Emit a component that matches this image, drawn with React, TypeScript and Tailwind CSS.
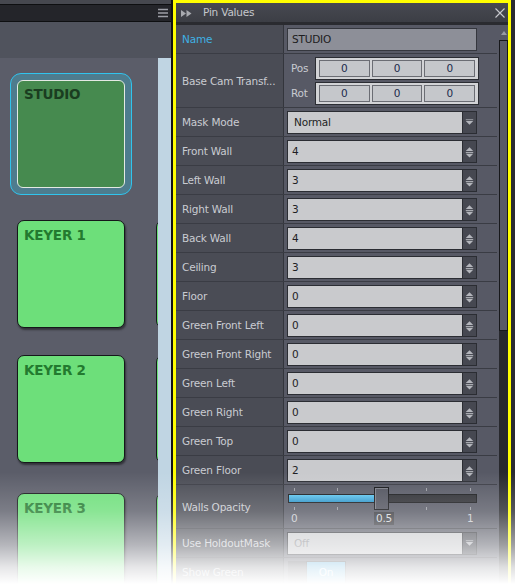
import React from "react";

const Spin = () => (
  <svg width="14" height="21" viewBox="0 0 14 21">
    <path d="M3 10 L7 6 L11 10 Z" fill="#b4b6bc" />
    <rect x="3" y="11" width="8" height="1" fill="#b4b6bc" />
    <path d="M3 13 L11 13 L7 17 Z" fill="#b4b6bc" />
  </svg>
);

const Drop = () => (
  <svg width="14" height="21" viewBox="0 0 14 21">
    <rect x="3" y="7" width="8" height="1" fill="#9fa1a8" />
    <path d="M3 9 L11 9 L7 13 Z" fill="#b4b6bc" />
  </svg>
);

function Row({
  label,
  children,
  tall,
  labelColor,
}: {
  label: string;
  children: React.ReactNode;
  tall?: "cam" | "slider";
  labelColor?: string;
}) {
  const h = tall === "cam" ? "h-[54px]" : tall === "slider" ? "h-[44px]" : "h-[29px]";
  return (
    <div className={`flex shrink-0 border-b border-[#3a3c44] ${h}`}>
      <div
        className={`w-[108px] shrink-0 border-r border-[#33353c] bg-[#4a4c55] pl-[6px] pt-[2px] flex items-center whitespace-nowrap overflow-hidden ${
          labelColor ?? "text-[#c9cbd1]"
        }`}
      >
        {label}
      </div>
      <div className="flex-1 bg-[#575965] flex items-center pl-[3px] pt-[1px]">{children}</div>
    </div>
  );
}

function NumInput({ v }: { v: string }) {
  return (
    <div className="w-[190px] h-[23px] flex border border-[#2b2d33]">
      <div className="flex-1 bg-[#c9cacd] pl-[4px] pt-[1px] flex items-center text-[#1e1e24]">{v}</div>
      <div className="w-[14px] bg-[#464851] border-l border-[#2b2d33] flex items-center justify-center">
        <Spin />
      </div>
    </div>
  );
}

function DropInput({ v, disabled }: { v: string; disabled?: boolean }) {
  return (
    <div className="w-[190px] h-[23px] flex border border-[#2b2d33]">
      <div
        className={`flex-1 bg-[#c9cacd] pl-[6px] pt-[1px] flex items-center ${
          disabled ? "text-[#8a8b90]" : "text-[#1e1e24]"
        }`}
      >
        {v}
      </div>
      <div className="w-[14px] bg-[#464851] border-l border-[#2b2d33] flex items-center justify-center">
        <Drop />
      </div>
    </div>
  );
}

function Vec({ label }: { label: string }) {
  return (
    <div className="flex items-center h-[23px]">
      <div className="w-[26px] pl-[2px] pt-[1px] text-[#c9cbd1]">{label}</div>
      <div className="w-[164px] h-[23px] border border-[#2b2d33] bg-[#d2d3d6] px-[3px] py-[2px] flex gap-[2px]">
        {[0, 1, 2].map((i) => (
          <div
            key={i}
            className="flex-1 border border-[#6b6d74] bg-[#c5c7cb] flex items-center justify-center pt-[1px] text-[#1c2a4c]"
          >
            0
          </div>
        ))}
      </div>
    </div>
  );
}

function Slider() {
  const ticks = [6, 49, 94, 138, 182];
  return (
    <div className="relative w-[192px] h-[43px] ml-[1px] -mt-[1px]">
      {ticks.map((x) => (
        <div key={"t" + x} className="absolute top-[3px] w-px h-[3px] bg-[#9a9ca3]" style={{ left: x }} />
      ))}
      {ticks.map((x) => (
        <div key={"b" + x} className="absolute top-[22px] w-px h-[3px] bg-[#9a9ca3]" style={{ left: x }} />
      ))}
      <div className="absolute left-0 top-[9px] w-[189px] h-[9px] bg-[#2c2d32] border border-[#16171a]">
        <div className="h-full w-[86px] bg-[linear-gradient(to_bottom,#5cc3ee,#2c93c8)]" />
      </div>
      <div className="absolute left-[86px] top-[2px] w-[15px] h-[23px] bg-[#50525d] border border-[#111215] shadow-[inset_1px_1px_0_#7a7c86]" />
      <div className="absolute left-[3px] top-[27px] text-[#c9cbd1] leading-[13px]">0</div>
      <div className="absolute left-[86px] top-[27px] h-[13px] px-[2px] bg-[#3a3b41] text-[#d6d8dc] leading-[13px]">
        0.5
      </div>
      <div className="absolute left-[179px] top-[27px] text-[#c9cbd1] leading-[13px]">1</div>
    </div>
  );
}

function Card({ text, dark }: { text: string; dark?: boolean }) {
  if (dark) {
    return (
      <div className="w-[108px] h-[108px] shrink-0 rounded-[6px] border border-[#e4e9e4] bg-[#468a4f] px-[6px] pt-[5px] text-[#1a3d20] font-bold text-[13.5px] leading-[16px]">
        {text}
      </div>
    );
  }
  return (
    <div className="w-[108px] h-[108px] shrink-0 rounded-[7px] border border-[#15171a] bg-[#6ddf7a] px-[6px] pt-[6px] text-[#237a2f] font-bold text-[13.5px] leading-[16px] shadow-[1px_2px_2px_rgba(0,0,0,0.45)]">
      {text}
    </div>
  );
}

function KeyerRow({ text, mt }: { text: string; mt: string }) {
  return (
    <div className={`flex gap-[31px] ml-[7px] ${mt}`}>
      <Card text={text} />
      <div className="w-[108px] h-[108px] shrink-0 rounded-[7px] border border-[#15171a] bg-[#6ddf7a]" />
    </div>
  );
}

export default function App() {
  const rows: [string, string][] = [
    ["Front Wall", "4"],
    ["Left Wall", "3"],
    ["Right Wall", "3"],
    ["Back Wall", "4"],
    ["Ceiling", "3"],
    ["Floor", "0"],
    ["Green Front Left", "0"],
    ["Green Front Right", "0"],
    ["Green Left", "0"],
    ["Green Right", "0"],
    ["Green Top", "0"],
    ["Green Floor", "2"],
  ];
  return (
    <div className="relative w-[515px] h-[584px] overflow-hidden flex bg-[#2b2c30] font-['DejaVu_Sans',sans-serif] text-[10.5px] tracking-[-0.2px]">
      {/* left */}
      <div className="w-[173px] shrink-0 h-full flex flex-col border-r-2 border-[#111214]">
        <div className="h-[4px] bg-[#46484f]" />
        <div className="h-[18px] bg-[#24252a] border-y border-[#0e0f11] flex items-center justify-end pr-[3px]">
          <svg width="10" height="10" viewBox="0 0 10 10">
            <path d="M0 1.5 H10 M0 5 H10 M0 8.5 H10" stroke="#9d9fa6" strokeWidth="1.3" />
          </svg>
        </div>
        <div className="h-[36px] bg-[#50535d]" />
        <div className="flex-1 flex min-h-0">
          <div className="w-[158px] bg-[#5b5d69] overflow-hidden flex flex-col pt-[15px] pl-[10px]">
            <div className="w-[122px] h-[122px] shrink-0 rounded-[11px] border border-[#30c4ee] bg-[#4e7c8e] p-[6px]">
              <Card text="STUDIO" dark />
            </div>
            <KeyerRow text="KEYER 1" mt="mt-[25px]" />
            <KeyerRow text="KEYER 2" mt="mt-[27px]" />
            <KeyerRow text="KEYER 3" mt="mt-[30px]" />
          </div>
          <div className="w-[13px] bg-[#c0d5e3]" />
        </div>
      </div>

      {/* panel */}
      <div className="w-[338px] shrink-0 h-[590px] border-[3px] border-[#ffff00] flex flex-col bg-[#4a4c55]">
        <div className="h-[19px] shrink-0 bg-[linear-gradient(to_bottom,#474951,#3c3e45)] flex items-center pl-[5px] pr-[2px] pt-[1px]">
          <svg width="11" height="7" viewBox="0 0 11 7">
            <path d="M0 0 L5 3.5 L0 7 Z M5.5 0 L10.5 3.5 L5.5 7 Z" fill="#a8aab0" />
          </svg>
          <span className="ml-[11px] text-[#c5c7cc]">Pin Values</span>
          <svg className="ml-auto mr-[1px]" width="10" height="10" viewBox="0 0 10 10">
            <path d="M0.5 0.5 L9.5 9.5 M9.5 0.5 L0.5 9.5" stroke="#c8cacf" strokeWidth="1.1" />
          </svg>
        </div>
        <div className="h-[3px] shrink-0 bg-[#2a2b30]" />
        <div className="flex flex-1 min-h-0 overflow-hidden">
          <div className="flex-1 flex flex-col">
            <Row label="Name" labelColor="text-[#3fb1e4]">
              <div className="w-[190px] h-[23px] border border-[#35373e] bg-[#8d8f98] pl-[4px] pt-[1px] flex items-center text-[#1c1c20]">
                STUDIO
              </div>
            </Row>
            <Row label="Base Cam Transf..." tall="cam">
              <div className="flex flex-col gap-[2px] pl-[2px]">
                <Vec label="Pos" />
                <Vec label="Rot" />
              </div>
            </Row>
            <Row label="Mask Mode">
              <DropInput v="Normal" />
            </Row>
            {rows.map(([l, v]) => (
              <Row key={l} label={l}>
                <NumInput v={v} />
              </Row>
            ))}
            <Row label="Walls Opacity" tall="slider">
              <Slider />
            </Row>
            <Row label="Use HoldoutMask">
              <DropInput v="Off" disabled />
            </Row>
            <Row label="Show Green">
              <div className="h-[23px] flex ml-[1px]">
                <div className="w-[18px] bg-[#3b3d45]" />
                <div className="w-[40px] bg-[#4aa6d6] border border-[#2b2d33] flex items-center justify-center text-[#eef6fb]">
                  On
                </div>
              </div>
            </Row>
          </div>
          <div className="w-[11px] shrink-0 flex flex-col bg-[#575965] pl-[2px]">
            <div className="h-[15px] shrink-0 flex justify-center pt-[6px]">
              <svg width="6" height="4" viewBox="0 0 6 4">
                <path d="M0 4 L3 0 L6 4 Z" fill="#9a9ca4" />
              </svg>
            </div>
            <div className="h-[291px] shrink-0 bg-[#585a66] border border-[#17181b]" />
            <div className="flex-1 bg-[#27282d]" />
          </div>
        </div>
      </div>
      <div className="w-[4px] shrink-0 bg-[#2b2c30]" />

      {/* fade overlay */}
      <div className="pointer-events-none absolute left-0 right-0 top-[472px] bottom-0 bg-[linear-gradient(to_bottom,rgba(255,255,255,0)_0%,rgba(255,255,255,0.2)_35%,rgba(255,255,255,0.55)_65%,rgba(255,255,255,0.85)_85%,#ffffff_100%)]" />
    </div>
  );
}
